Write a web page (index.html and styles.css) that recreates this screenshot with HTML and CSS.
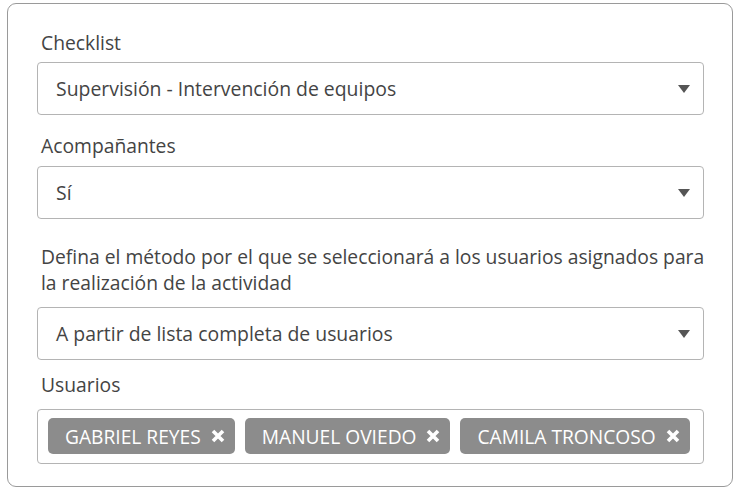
FILE: index.html
```html
<!DOCTYPE html>
<html lang="es">
<head>
<meta charset="utf-8">
<link rel="stylesheet" href="styles.css">
</head>
<body>
<div class="card">
  <div class="label l1">Checklist</div>
  <div class="select s1"><span>Supervisión - Intervención de equipos</span><i class="arrow"></i></div>
  <div class="label l2">Acompañantes</div>
  <div class="select s2"><span>Sí</span><i class="arrow"></i></div>
  <div class="label para">Defina el método por el que se seleccionará a los usuarios asignados para la realización de la actividad</div>
  <div class="select s3"><span>A partir de lista completa de usuarios</span><i class="arrow"></i></div>
  <div class="label l4">Usuarios</div>
  <div class="tags">
    <div class="tag">GABRIEL REYES<span class="x"><svg viewBox="0 0 14 14" width="14" height="14"><path d="M2 2L12 12M12 2L2 12" stroke="#fff" stroke-width="3.6"/></svg></span></div>
    <div class="tag">MANUEL OVIEDO<span class="x"><svg viewBox="0 0 14 14" width="14" height="14"><path d="M2 2L12 12M12 2L2 12" stroke="#fff" stroke-width="3.6"/></svg></span></div>
    <div class="tag">CAMILA TRONCOSO<span class="x"><svg viewBox="0 0 14 14" width="14" height="14"><path d="M2 2L12 12M12 2L2 12" stroke="#fff" stroke-width="3.6"/></svg></span></div>
  </div>
</div>
</body>
</html>
```
FILE: styles.css
```css
* { box-sizing: border-box; }
body {
  margin: 0;
  background: #fff;
  font-family: "Open Sans", "Noto Sans", sans-serif;
  color: #444;
}
.card {
  margin: 3px 0 0 7px;
  width: 726px;
  height: 484px;
  border: 1px solid #9a9a9a;
  border-radius: 9px;
  padding: 26px 28px 0 29px;
}
.label {
  font-size: 19.3px;
  line-height: 26px;
  padding-left: 4px;
  color: #444;
}
.l1 { margin-bottom: 6px; }
.l2 { margin-bottom: 7px; }
.para { margin-bottom: 11px; margin-right: -14px; }
.l4 { margin-bottom: 11px; }
.select {
  height: 53px;
  border: 1px solid #b4b4b4;
  border-radius: 4px;
  display: flex;
  align-items: center;
  justify-content: space-between;
  padding: 0 13px 0 18px;
  font-size: 19.4px;
  color: #444;
}
.s1 { margin-bottom: 18px; }
.s2 { margin-bottom: 25px; }
.s3 { margin-bottom: 12px; }
.arrow {
  width: 0;
  height: 0;
  border-left: 6.5px solid transparent;
  border-right: 6.5px solid transparent;
  border-top: 8px solid #555;
}
.tags {
  height: 55px;
  border: 1px solid #b4b4b4;
  border-radius: 4px;
  display: flex;
  align-items: flex-start;
  gap: 10px;
  padding: 8px 10px;
}
.tag {
  height: 36px;
  background: #8c8c8c;
  border-radius: 5px;
  color: #fff;
  font-size: 19.2px;
  display: flex;
  align-items: center;
  padding: 0 10px 0 17px;
  white-space: pre;
}
.x {
  display: flex;
  margin-left: 10px;
}
```
